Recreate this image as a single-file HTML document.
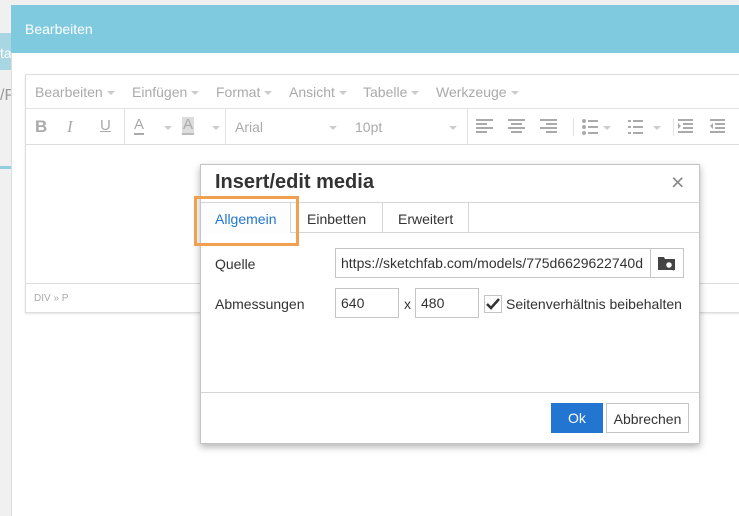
<!DOCTYPE html>
<html><head><style>
*{box-sizing:border-box;margin:0;padding:0}
body{width:739px;height:516px;overflow:hidden;background:#f0f0f0;font-family:"Liberation Sans",Arial,sans-serif;position:relative}
.abs{position:absolute}
.g{color:#aaa;font-size:14px}
.car{display:inline-block;border-left:4px solid transparent;border-right:4px solid transparent;border-top:4px solid #ccc;vertical-align:middle;margin-left:4px}
</style></head><body>
<div class="abs" style="left:0;top:0;width:11px;height:516px;background:#f0f0f0"></div>
<div class="abs" style="left:0;top:33px;width:11px;height:37px;background:#a8d6e2"></div>
<div class="abs" style="left:0;top:45px;font-size:14px;color:#fff">ta</div>
<div class="abs" style="left:0;top:87px;font-size:16px;color:#999">/P</div>
<div class="abs" style="left:0;top:166px;width:11px;height:3px;background:#8fcfe0"></div>
<div class="abs" style="left:11px;top:5px;width:728px;height:511px;background:#fff;border-left:1px solid #ddd"></div>
<div class="abs" style="left:11px;top:5px;width:728px;height:48px;background:#7fcadf;color:#fff;font-size:14px;padding:16px 0 0 14px">Bearbeiten</div>
<!-- editor -->
<div class="abs" style="left:25px;top:74px;width:720px;height:239px;border:1px solid #ddd;box-shadow:0 1px 2px rgba(0,0,0,.1)"></div>
<div class="abs g" style="left:35px;top:84px;white-space:nowrap">Bearbeiten<i class="car"></i></div>
<div class="abs g" style="left:132px;top:84px;white-space:nowrap">Einfügen<i class="car"></i></div>
<div class="abs g" style="left:216px;top:84px;white-space:nowrap">Format<i class="car"></i></div>
<div class="abs g" style="left:289px;top:84px;white-space:nowrap">Ansicht<i class="car"></i></div>
<div class="abs g" style="left:363px;top:84px;white-space:nowrap">Tabelle<i class="car"></i></div>
<div class="abs g" style="left:436px;top:84px;white-space:nowrap">Werkzeuge<i class="car"></i></div>
<div class="abs" style="left:26px;top:108px;width:713px;height:1px;background:#e2e2e2"></div>
<div class="abs" style="left:26px;top:144px;width:713px;height:1px;background:#ddd"></div>
<div class="abs" style="left:35px;top:117px;font-size:17px;color:#aaa;font-weight:bold">B</div>
<div class="abs" style="left:67px;top:117px;font-size:17px;color:#aaa;font-style:italic;font-family:'Liberation Serif',serif">I</div>
<div class="abs" style="left:100px;top:117px;font-size:15px;color:#aaa;text-decoration:underline">U</div>
<div class="abs" style="left:124px;top:109px;width:1px;height:35px;background:#e2e2e2"></div>
<div class="abs" style="left:134px;top:117px;font-size:15px;color:#aaa;border-bottom:2px solid #aaa;line-height:16px">A</div><i class="car abs" style="left:160px;top:126px"></i>
<div class="abs" style="left:182px;top:117px;font-size:15px;color:#aaa;background:#ddd;border-bottom:2px solid #bbb;line-height:16px;padding:0 1px">A</div><i class="car abs" style="left:208px;top:126px"></i>
<div class="abs" style="left:225px;top:109px;width:1px;height:35px;background:#e2e2e2"></div>
<div class="abs g" style="left:235px;top:119px">Arial</div><i class="car abs" style="left:325px;top:126px"></i>
<div class="abs g" style="left:355px;top:119px">10pt</div><i class="car abs" style="left:445px;top:126px"></i>
<div class="abs" style="left:467px;top:109px;width:1px;height:35px;background:#e2e2e2"></div>
<svg class="abs" style="left:476px;top:118px" width="260" height="18" fill="#aaa">
<rect x="0" y="1" width="17" height="2"/><rect x="0" y="5" width="11" height="2"/><rect x="0" y="9" width="17" height="2"/><rect x="0" y="13" width="11" height="2"/>
<rect x="32" y="1" width="17" height="2"/><rect x="35" y="5" width="11" height="2"/><rect x="32" y="9" width="17" height="2"/><rect x="35" y="13" width="11" height="2"/>
<rect x="64" y="1" width="17" height="2"/><rect x="70" y="5" width="11" height="2"/><rect x="64" y="9" width="17" height="2"/><rect x="70" y="13" width="11" height="2"/>
<rect x="97" y="-9" width="1" height="35" fill="#e2e2e2"/>
<circle cx="108" cy="3" r="2"/><circle cx="108" cy="9" r="2"/><circle cx="108" cy="15" r="2"/><rect x="112" y="2" width="10" height="2"/><rect x="112" y="8" width="10" height="2"/><rect x="112" y="14" width="10" height="2"/>
<path d="M127 8h8l-4 4z" fill="#ccc"/>
<rect x="152" y="2" width="3" height="2"/><rect x="152" y="8" width="3" height="2"/><rect x="152" y="14" width="3" height="2"/><rect x="157" y="2" width="10" height="2"/><rect x="157" y="8" width="10" height="2"/><rect x="157" y="14" width="10" height="2"/>
<path d="M177 8h8l-4 4z" fill="#ccc"/>
<rect x="197" y="-9" width="1" height="35" fill="#e2e2e2"/>
<rect x="202" y="1" width="15" height="2"/><rect x="207" y="5" width="10" height="2"/><rect x="207" y="9" width="10" height="2"/><rect x="202" y="13" width="15" height="2"/><path d="M202 5l3 3-3 3z"/>
<rect x="234" y="1" width="15" height="2"/><rect x="239" y="5" width="10" height="2"/><rect x="239" y="9" width="10" height="2"/><rect x="234" y="13" width="15" height="2"/><path d="M237 5l-3 3 3 3z"/>
</svg>
<div class="abs" style="left:26px;top:283px;width:713px;height:1px;background:#ddd"></div>
<div class="abs" style="left:34px;top:293px;font-size:10px;color:#aaa">DIV » P</div>
<!-- media dialog -->
<div class="abs" style="left:200px;top:164px;width:500px;height:280px;background:#fff;border:1px solid #c5c5c5;box-shadow:0 3px 7px rgba(0,0,0,.3)"></div>
<div class="abs" style="left:215px;top:171px;font-size:20px;font-weight:bold;color:#333">Insert/edit media</div>
<div class="abs" style="left:671px;top:169px;font-size:23px;color:#888">×</div>
<div class="abs" style="left:201px;top:202px;width:498px;height:1px;background:#d5d5d5"></div>
<div class="abs" style="left:201px;top:232px;width:498px;height:1px;background:#d5d5d5"></div>
<div class="abs" style="left:201px;top:203px;width:90px;height:30px;background:#fdfdfd;border-right:1px solid #d5d5d5;color:#2276d2;font-size:14px;padding:8px 0 0 14px">Allgemein</div>
<div class="abs" style="left:291px;top:203px;width:92px;height:29px;border-right:1px solid #d5d5d5;color:#333;font-size:14px;padding:8px 0 0 16px">Einbetten</div>
<div class="abs" style="left:383px;top:203px;width:86px;height:29px;border-right:1px solid #d5d5d5;color:#333;font-size:14px;padding:8px 0 0 15px">Erweitert</div>
<div class="abs" style="left:194px;top:196px;width:105px;height:50px;border:3px solid #f0a050"></div>
<div class="abs" style="left:215px;top:256px;font-size:14px;color:#333">Quelle</div>
<div class="abs" style="left:335px;top:248px;width:349px;height:30px;border:1px solid #c5c5c5;font-size:14px;color:#333;padding:6px 0 0 5px;white-space:nowrap;overflow:hidden">https://sketchfab.com/models/775d6629622740d</div>
<div class="abs" style="left:650px;top:249px;width:33px;height:28px;background:#fff;border-left:1px solid #c5c5c5"></div>
<svg class="abs" style="left:658px;top:255px" width="18" height="16" fill="#444"><path d="M0 2h6l1 2h10v11H0z"/><circle cx="11" cy="10" r="3.5" fill="#fff" stroke="#444" stroke-width="1.5"/><path d="M13 12l3 3" stroke="#444" stroke-width="2"/></svg>
<div class="abs" style="left:215px;top:296px;font-size:14px;color:#333">Abmessungen</div>
<div class="abs" style="left:335px;top:288px;width:64px;height:30px;border:1px solid #c5c5c5;font-size:14px;color:#333;padding:6px 0 0 5px">640</div>
<div class="abs" style="left:404px;top:296px;font-size:14px;color:#333">x</div>
<div class="abs" style="left:415px;top:288px;width:64px;height:30px;border:1px solid #c5c5c5;font-size:14px;color:#333;padding:6px 0 0 5px">480</div>
<div class="abs" style="left:484px;top:295px;width:18px;height:18px;border:1px solid #c5c5c5"></div>
<svg class="abs" style="left:486px;top:298px" width="14" height="12"><path d="M1 6l4 4 8-9" stroke="#333" stroke-width="2.5" fill="none"/></svg>
<div class="abs" style="left:506px;top:296px;font-size:14px;color:#333">Seitenverhältnis beibehalten</div>
<div class="abs" style="left:201px;top:392px;width:498px;height:1px;background:#d5d5d5"></div>
<div class="abs" style="left:551px;top:403px;width:52px;height:30px;background:#2276d2;color:#fff;font-size:14px;text-align:center;padding-top:7px">Ok</div>
<div class="abs" style="left:606px;top:403px;width:83px;height:30px;border:1px solid #c5c5c5;color:#333;font-size:14px;text-align:center;padding-top:7px">Abbrechen</div>
</body></html>
